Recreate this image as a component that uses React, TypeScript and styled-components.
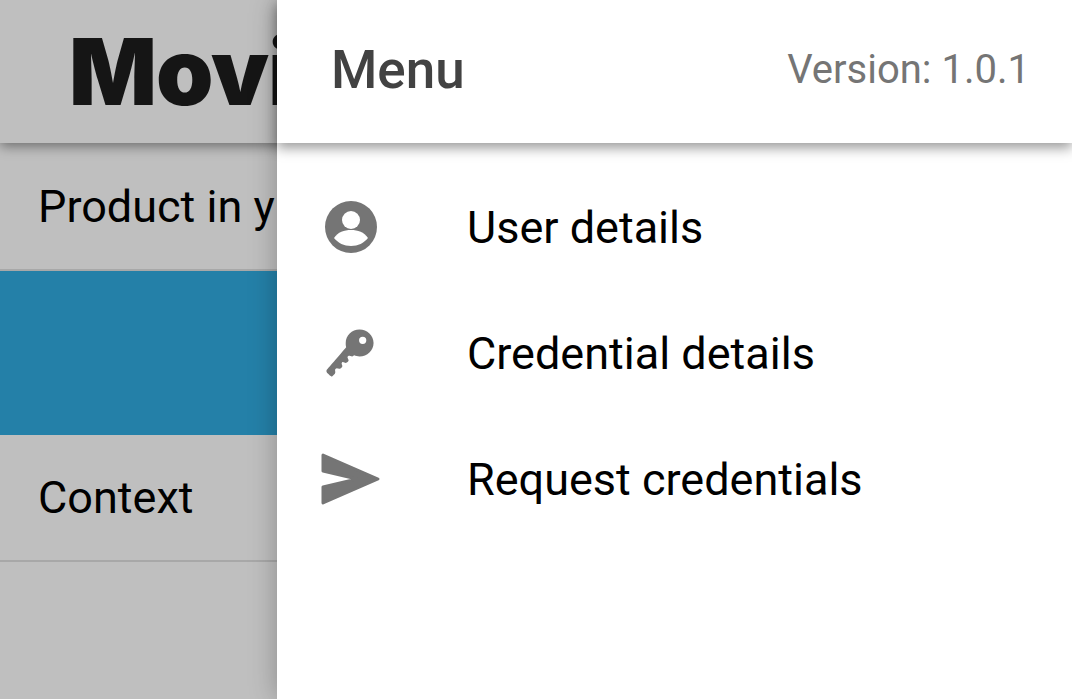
import React from 'react'
import styled, { createGlobalStyle } from 'styled-components'
import { IoKey } from 'react-icons/io5'

const GlobalStyle = createGlobalStyle`
  html, body {
    margin: 0;
    padding: 0;
    background: #fff;
  }
  body {
    font-family: Roboto, "Liberation Sans", sans-serif;
  }
`

const Screen = styled.div`
  position: relative;
  width: 1072px;
  height: 699px;
  overflow: hidden;
`

const AppBar = styled.header`
  height: 143px;
  padding-left: 69px;
  display: flex;
  align-items: center;
  box-sizing: border-box;
  background: #fff;
  box-shadow: 0 3px 12px rgba(0, 0, 0, 0.45);
  position: relative;
`

const Logo = styled.h1`
  margin: 0;
  font-family: Inter, sans-serif;
  font-weight: 900;
  font-size: 92px;
  letter-spacing: -1px;
  line-height: 1;
  color: #1c1c1c;
  white-space: nowrap;
`

const Row = styled.div<{ $height: number }>`
  height: ${(p) => p.$height}px;
  padding-left: 38px;
  display: flex;
  align-items: center;
  box-sizing: border-box;
  border-bottom: 2px solid #e0e0e0;
  font-size: 45px;
  color: #000;
  white-space: nowrap;
`

const Banner = styled.div`
  height: 164px;
  background: #31abe0;
`

const Scrim = styled.div`
  position: absolute;
  inset: 0;
  background: rgba(0, 0, 0, 0.25);
`

const Drawer = styled.aside`
  position: absolute;
  top: 0;
  bottom: 0;
  left: 277px;
  right: 0;
  background: #fff;
  box-shadow: 0 0 26px rgba(0, 0, 0, 0.28);
`

const DrawerHeader = styled.div`
  height: 143px;
  padding: 0 42px 4px 54px;
  display: flex;
  align-items: center;
  justify-content: space-between;
  box-sizing: border-box;
  box-shadow: 0 5px 12px rgba(0, 0, 0, 0.4);
`

const DrawerTitle = styled.span`
  font-size: 53px;
  font-weight: 500;
  color: #424242;
`

const Version = styled.span`
  font-size: 40px;
  color: #757575;
`

const MenuList = styled.nav`
  padding-top: 21px;
  display: flex;
  flex-direction: column;
`

const MenuItem = styled.div`
  height: 126px;
  display: grid;
  grid-template-columns: 190px 1fr;
  align-items: center;
  font-size: 45px;
  color: #000;
`

const IconSlot = styled.span`
  display: flex;
  align-items: center;
  padding-left: 44px;
  color: #757575;
`

const AccountIcon = () => (
  <svg width="60" height="60" viewBox="0 0 60 60" style={{ marginLeft: 0 }}>
    <circle cx="30" cy="30" r="26" fill="currentColor" />
    <circle cx="30" cy="23" r="9" fill="#fff" />
    <path d="M13 41c4-6 10-8 17-8s13 2 17 8c-4 5-10 8-17 8s-13-3-17-8z" fill="#fff" />
  </svg>
)

const SendIcon = () => (
  <svg width="60" height="54" viewBox="0 0 60 54">
    <path
      d="M2 3 57 27 2 51V35L36 27 2 19z"
      fill="currentColor"
      stroke="currentColor"
      strokeWidth="3"
      strokeLinejoin="round"
    />
  </svg>
)

export default function App() {
  return (
    <Screen>
      <GlobalStyle />
      <AppBar>
        <Logo>Movi</Logo>
      </AppBar>
      <Row $height={128}>Product in y</Row>
      <Banner />
      <Row $height={127}>Context</Row>
      <Scrim />
      <Drawer>
        <DrawerHeader>
          <DrawerTitle>Menu</DrawerTitle>
          <Version>Version: 1.0.1</Version>
        </DrawerHeader>
        <MenuList>
          <MenuItem>
            <IconSlot>
              <AccountIcon />
            </IconSlot>
            User details
          </MenuItem>
          <MenuItem>
            <IconSlot>
              <IoKey size={58} />
            </IconSlot>
            Credential details
          </MenuItem>
          <MenuItem>
            <IconSlot>
              <SendIcon />
            </IconSlot>
            Request credentials
          </MenuItem>
        </MenuList>
      </Drawer>
    </Screen>
  )
}
